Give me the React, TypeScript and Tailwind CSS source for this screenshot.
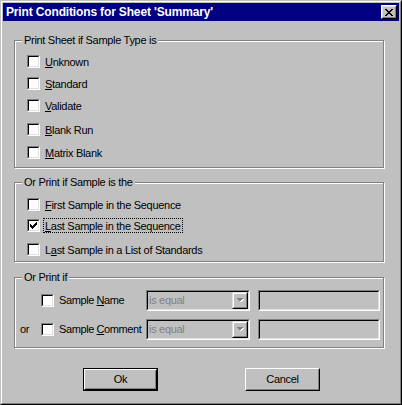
import React from 'react';

const font = "font-['Liberation_Sans',Arial,sans-serif]";

const Checkbox = ({ checked }: { checked?: boolean }) => (
  <div className="w-[13px] h-[13px] shrink-0 border border-t-[#808080] border-l-[#808080] border-b-white border-r-white">
    <div className="w-full h-full border border-t-black border-l-black border-b-[#dfdfdf] border-r-[#dfdfdf] bg-white">
      {checked && (
        <svg width="9" height="9" viewBox="0 0 9 9" shapeRendering="crispEdges" className="block">
          <rect x="7" y="1" width="1" height="1" fill="#000" />
          <rect x="6" y="2" width="2" height="1" fill="#000" />
          <rect x="1" y="3" width="1" height="1" fill="#000" />
          <rect x="5" y="3" width="3" height="1" fill="#000" />
          <rect x="1" y="4" width="2" height="1" fill="#000" />
          <rect x="4" y="4" width="3" height="1" fill="#000" />
          <rect x="1" y="5" width="5" height="1" fill="#000" />
          <rect x="2" y="6" width="3" height="1" fill="#000" />
          <rect x="3" y="7" width="1" height="1" fill="#000" />
        </svg>
      )}
    </div>
  </div>
);

// label with an accelerator letter underlined
const Label = ({ text, at }: { text: string; at: number }) => (
  <>
    {text.slice(0, at)}
    <span className="underline underline-offset-[1px]">{text[at]}</span>
    {text.slice(at + 1)}
  </>
);

interface RowProps {
  text: string;
  at: number;
  checked?: boolean;
  focused?: boolean;
  className?: string;
}

const CheckRow = ({ text, at, checked, focused, className }: RowProps) => (
  <div className={`flex items-center h-[13px] gap-[3px] ${className ?? ''}`}>
    <Checkbox checked={checked} />
    <span
      className={`h-[15px] px-[1px] leading-[14px] border whitespace-nowrap ${
        focused ? 'border-dotted border-black' : 'border-transparent'
      }`}
    >
      <Label text={text} at={at} />
    </span>
  </div>
);

const GroupBox = ({
  title,
  className,
  children,
}: {
  title: string;
  className?: string;
  children: React.ReactNode;
}) => (
  <div
    className={`relative ml-[11px] w-[370px] border border-[#808080] shadow-[inset_1px_1px_0_#fff,1px_1px_0_#fff] ${className ?? ''}`}
  >
    <span className="absolute left-[7px] top-[-7px] px-[2px] leading-[13px] bg-[#c0c0c0] whitespace-nowrap">
      {title}
    </span>
    {children}
  </div>
);

const Sunken = ({ className, children }: { className?: string; children?: React.ReactNode }) => (
  <div className={`h-[21px] shrink-0 border border-t-[#808080] border-l-[#808080] border-b-white border-r-white ${className ?? ''}`}>
    <div className="h-full border border-t-black border-l-black border-b-[#dfdfdf] border-r-[#dfdfdf] bg-[#c0c0c0] flex">
      {children}
    </div>
  </div>
);

const Combo = () => (
  <Sunken className="w-[104px]">
    <span className="flex-1 pl-[1px] leading-[17px] text-[#808080]">is equal</span>
    <div className="w-[16px] h-full border border-t-[#dfdfdf] border-l-[#dfdfdf] border-b-black border-r-black">
      <div className="w-full h-full border border-t-white border-l-white border-b-[#808080] border-r-[#808080] flex items-center justify-center">
        <svg width="8" height="5" viewBox="0 0 8 5" shapeRendering="crispEdges">
          <polygon points="1,1 8,1 4.5,4.5" fill="#fff" />
          <polygon points="0,0 7,0 3.5,3.5" fill="#808080" />
        </svg>
      </div>
    </div>
  </Sunken>
);

const Button = ({ label, primary }: { label: string; primary?: boolean }) => (
  <div className={`w-[75px] h-[23px] ${primary ? 'border border-black' : ''}`}>
    <div className="w-full h-full border border-t-white border-l-white border-b-black border-r-black">
      <div className="w-full h-full border border-t-[#c0c0c0] border-l-[#c0c0c0] border-b-[#808080] border-r-[#808080] flex items-center justify-center leading-[13px]">
        {label}
      </div>
    </div>
  </div>
);

export default function App() {
  return (
    <div className={`w-[402px] h-[405px] border border-t-[#c0c0c0] border-l-[#c0c0c0] border-b-black border-r-black text-[11px] text-black tracking-[-0.3px] ${font}`}>
      <div className="h-full border border-t-white border-l-white border-b-[#808080] border-r-[#808080] bg-[#c0c0c0] p-[1px] flex flex-col">
        <div className="h-[18px] bg-[#000080] flex items-center justify-between pl-[3px] pr-[2px]">
          <span className="text-white font-bold text-[12px] tracking-[-0.15px] leading-[14px]">Print Conditions for Sheet 'Summary'</span>
          <div className="w-[16px] h-[14px] border border-t-white border-l-white border-b-black border-r-black">
            <div className="w-full h-full border border-t-[#dfdfdf] border-l-[#dfdfdf] border-b-[#808080] border-r-[#808080] bg-[#c0c0c0] flex items-center justify-center">
              <svg width="8" height="7" viewBox="0 0 8 7" shapeRendering="crispEdges">
                <path d="M0 0h2v1h-2zM6 0h2v1h-2zM1 1h2v1h-2zM5 1h2v1h-2zM2 2h4v1h-4zM3 3h2v1h-2zM2 4h4v1h-4zM1 5h2v1h-2zM5 5h2v1h-2zM0 6h2v1h-2zM6 6h2v1h-2z" fill="#000" />
              </svg>
            </div>
          </div>
        </div>

        <GroupBox title="Print Sheet if Sample Type is" className="mt-[19px] h-[128px] pl-[12px] pt-[14px]">
          <CheckRow text="Unknown" at={0} />
          <CheckRow text="Standard" at={0} className="mt-[9px]" />
          <CheckRow text="Validate" at={0} className="mt-[9px]" />
          <CheckRow text="Blank Run" at={0} className="mt-[11px]" />
          <CheckRow text="Matrix Blank" at={0} className="mt-[10px]" />
        </GroupBox>

        <GroupBox title="Or Print if Sample is the" className="mt-[14px] h-[80px] pl-[12px] pt-[15px]">
          <CheckRow text="First Sample in the Sequence" at={0} />
          <CheckRow text="Last Sample in the Sequence" at={0} checked focused className="mt-[8px]" />
          <CheckRow text="Last Sample in a List of Standards" at={1} className="mt-[11px]" />
        </GroupBox>

        <GroupBox title="Or Print if" className="mt-[15px] h-[71px] pt-[12px]">
          <div className="flex items-center h-[21px]">
            <div className="w-[26px] shrink-0" />
            <Checkbox />
            <span className="w-[92px] shrink-0 pl-[5px] whitespace-nowrap tracking-[-0.4px]">
              <Label text="Sample Name" at={7} />
            </span>
            <Combo />
            <Sunken className="w-[122px] ml-[8px]" />
          </div>
          <div className="flex items-center h-[21px] mt-[8px]">
            <div className="w-[26px] shrink-0 pl-[5px]">or</div>
            <Checkbox />
            <span className="w-[92px] shrink-0 pl-[5px] whitespace-nowrap tracking-[-0.4px]">
              <Label text="Sample Comment" at={7} />
            </span>
            <Combo />
            <Sunken className="w-[122px] ml-[8px]" />
          </div>
        </GroupBox>

        <div className="flex mt-[20px] ml-[80px]">
          <Button label="Ok" primary />
          <div className="ml-[87px]">
            <Button label="Cancel" />
          </div>
        </div>
      </div>
    </div>
  );
}
